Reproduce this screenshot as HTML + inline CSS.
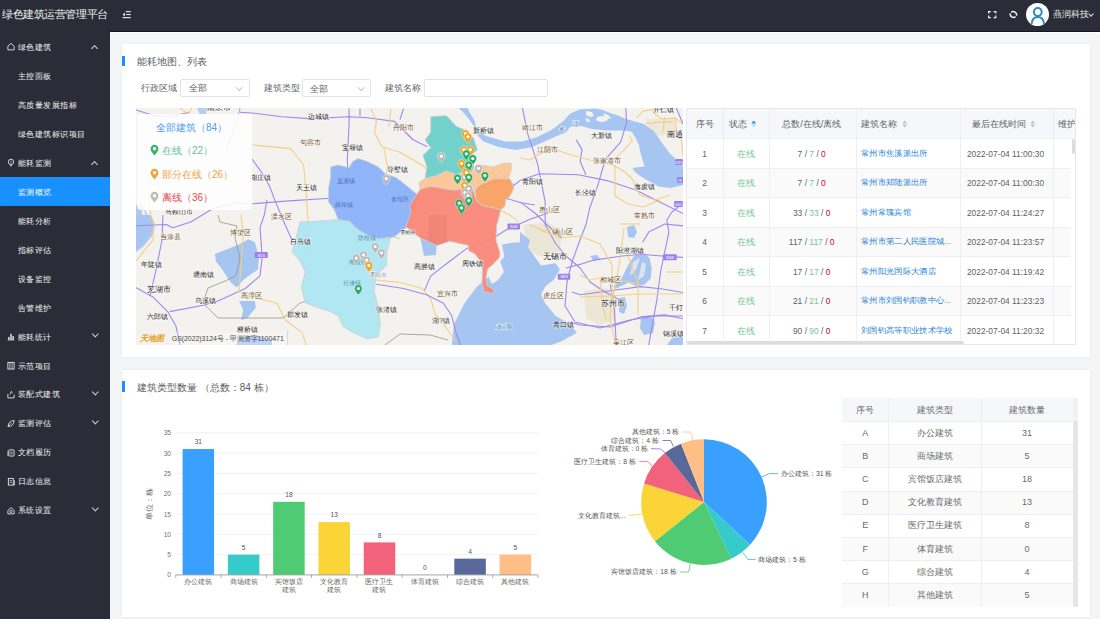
<!DOCTYPE html>
<html><head><meta charset="utf-8">
<style>
*{margin:0;padding:0;box-sizing:border-box}
html,body{width:1100px;height:619px;overflow:hidden;background:#f4f5f7;font-family:"Liberation Sans",sans-serif;text-spacing-trim:space-all;}
.a{position:absolute;white-space:nowrap}
#hdr{position:absolute;left:0;top:0;width:1100px;height:31px;background:#2a2d37;box-shadow:0 1px 0 #15161e}
#side{position:absolute;left:0;top:31px;width:110px;height:588px;background:#2a2d37}
.mi{position:absolute;left:0;width:110px;height:29.3px;color:#f5f5f5;font-size:9px;line-height:29.3px}
.mi .t{position:absolute;left:17.6px;top:0.6px;transform:scale(0.94);transform-origin:0 50%}
.mi.g .t{left:17.5px}
.mi .ic{position:absolute;left:7px;top:10px;width:8px;height:9px}
.chev{position:absolute;left:92px;top:12px;width:5px;height:5px;border-left:1px solid #cfd0d3;border-top:1px solid #cfd0d3}
.chev.up{transform:rotate(45deg);top:14px}
.chev.dn{transform:rotate(225deg);top:9.8px;width:4.6px;height:4.6px;left:92.5px}
.mi.act{background:#1890ff;color:#fff}
.card{position:absolute;left:122px;width:967.5px;background:#fff;box-shadow:0 0 3px rgba(0,0,0,.06)}
.bar{position:absolute;left:0;width:3px;background:#1890ff}
.ttl{position:absolute;color:#5a5e66;font-size:9.8px}
.lbl{position:absolute;color:#606266;font-size:9px}
.sel{position:absolute;height:18px;border:1px solid #e2e4e9;border-radius:2px;background:#fff}
.sel span{position:absolute;left:7.3px;top:2.5px;font-size:9px;color:#606266}
.sel i{position:absolute;top:5px;width:4.5px;height:4.5px;border-right:1px solid #c0c4cc;border-bottom:1px solid #c0c4cc;transform:rotate(45deg)}
</style></head><body>
<div id="hdr">
  <div class="a" style="left:1.5px;top:6.3px;font-size:11px;color:#f2f2f2;line-height:17px;transform:scale(0.962);transform-origin:0 50%">绿色建筑运营管理平台</div>
  <svg class="a" style="left:122px;top:10px" width="9" height="9" viewBox="0 0 9 9"><path d="M0.5 4.5L3 2.5V6.5Z" fill="#ddd"/><rect x="3.8" y="1" width="5" height="1.2" fill="#ddd"/><rect x="4.2" y="3.9" width="4.6" height="1.2" fill="#ddd"/><rect x="0.5" y="7" width="8.3" height="1.2" fill="#ddd"/></svg>
  <svg class="a" style="left:988px;top:10.8px" width="9" height="8" viewBox="0 0 9 8"><path d="M0.6 2.6V0.6H2.8M5.6 0.6H7.8V2.6M7.8 4.6V6.6H5.6M2.8 6.6H0.6V4.6" stroke="#f0f0f0" stroke-width="1.2" fill="none"/></svg>
  <svg class="a" style="left:1008.5px;top:10px" width="9" height="9" viewBox="0 0 9 9"><path d="M2.2 2.3A3.4 3.4 0 0 1 7.6 5.6M6.6 6.7A3.4 3.4 0 0 1 1.2 3.4" stroke="#f0f0f0" stroke-width="1.5" fill="none"/></svg>
  <svg class="a" style="left:1026.3px;top:3px" width="23" height="23" viewBox="0 0 23 23"><circle cx="11.5" cy="11.5" r="11.5" fill="#fff"/><circle cx="11.8" cy="9" r="3.9" stroke="#2b8bbd" stroke-width="2" fill="none"/><path d="M5.6 20.8C6 16.5 8.6 14 11.8 14S17.6 16.5 18 20.8" stroke="#2b8bbd" stroke-width="2" fill="none"/></svg>
  <div class="a" style="left:1052.5px;top:8px;font-size:9px;color:#f0f0f0;line-height:13px">燕润科技</div>
  <div class="a" style="left:1088.5px;top:11.5px;width:4px;height:4px;border-right:1px solid #ddd;border-bottom:1px solid #ddd;transform:rotate(45deg)"></div>
</div>
<div class="a" style="left:110px;top:32px;width:990px;height:1px;background:#fff"></div>
<div id="side">
<div class="mi" style="top:1.35px"><svg class="ic" width="9" height="9" viewBox="0 0 9 9"><path d="M1 4.2L4.5 1L8 4.2V8.3H1Z" stroke="#e8e8e8" stroke-width="1" fill="none"/></svg><span class="t">绿色建筑</span><i class="chev up"></i></div>
<div class="mi" style="top:30.31px"><span class="t">主控面板</span></div>
<div class="mi" style="top:59.27px"><span class="t">高质量发展指标</span></div>
<div class="mi" style="top:88.23px"><span class="t">绿色建筑标识项目</span></div>
<div class="mi" style="top:117.19px"><svg class="ic" width="9" height="9" viewBox="0 0 9 9"><circle cx="4.5" cy="3.8" r="3" stroke="#e8e8e8" stroke-width="1" fill="none"/><path d="M3.2 7.2H5.8M3.6 8.5H5.4" stroke="#e8e8e8" stroke-width="0.9"/><path d="M4.5 2.5V4.8" stroke="#e8e8e8" stroke-width="0.8"/></svg><span class="t">能耗监测</span><i class="chev up"></i></div>
<div class="mi act" style="top:146.15px"><span class="t">监测概览</span></div>
<div class="mi" style="top:175.11px"><span class="t">能耗分析</span></div>
<div class="mi" style="top:204.07px"><span class="t">指标评估</span></div>
<div class="mi" style="top:233.03px"><span class="t">设备监控</span></div>
<div class="mi" style="top:261.99px"><span class="t">告警维护</span></div>
<div class="mi" style="top:290.95px"><svg class="ic" width="9" height="9" viewBox="0 0 9 9"><path d="M0.8 8.3H8.2" stroke="#e8e8e8" stroke-width="1"/><rect x="1.3" y="5" width="1.6" height="3" fill="#e8e8e8"/><rect x="3.7" y="1.5" width="1.6" height="6.5" fill="#e8e8e8"/><rect x="6.1" y="4" width="1.6" height="4" fill="#e8e8e8"/></svg><span class="t">能耗统计</span><i class="chev dn"></i></div>
<div class="mi" style="top:319.91px"><svg class="ic" width="9" height="9" viewBox="0 0 9 9"><rect x="1" y="1" width="7" height="7.5" stroke="#e8e8e8" stroke-width="1" fill="none"/><path d="M3.3 1V8.5M5.7 1V8.5" stroke="#e8e8e8" stroke-width="0.8"/></svg><span class="t">示范项目</span></div>
<div class="mi" style="top:348.87px"><svg class="ic" width="9" height="9" viewBox="0 0 9 9"><path d="M1 4V8.3H8V4.5" stroke="#e8e8e8" stroke-width="1" fill="none"/><path d="M3.5 4.5L5 1L6 2.5" stroke="#e8e8e8" stroke-width="1" fill="none"/></svg><span class="t">装配式建筑</span><i class="chev dn"></i></div>
<div class="mi" style="top:377.83px"><svg class="ic" width="9" height="9" viewBox="0 0 9 9"><path d="M1.2 8C1.5 3.5 4 1.3 8 1.2C7.8 5.5 5.5 7.8 1.2 8Z" stroke="#e8e8e8" stroke-width="1" fill="none"/><path d="M1.5 7.7L5 4.2" stroke="#e8e8e8" stroke-width="0.8"/></svg><span class="t">监测评估</span><i class="chev dn"></i></div>
<div class="mi" style="top:406.79px"><svg class="ic" width="9" height="9" viewBox="0 0 9 9"><rect x="2" y="1.5" width="6" height="7" rx="0.8" stroke="#e8e8e8" stroke-width="1" fill="none"/><path d="M1 2.5V8.5" stroke="#e8e8e8" stroke-width="0.8"/><path d="M3.5 4H6.5M3.5 6H6.5" stroke="#e8e8e8" stroke-width="0.8"/></svg><span class="t">文档履历</span></div>
<div class="mi" style="top:435.75px"><svg class="ic" width="9" height="9" viewBox="0 0 9 9"><rect x="1.5" y="1" width="5.5" height="7.5" stroke="#e8e8e8" stroke-width="1" fill="none"/><path d="M7 8.5H8.3V3" stroke="#e8e8e8" stroke-width="0.9" fill="none"/><path d="M3 3.5H5.5M3 5.5H5.5" stroke="#e8e8e8" stroke-width="0.8"/></svg><span class="t">日志信息</span></div>
<div class="mi" style="top:464.71px"><svg class="ic" width="9" height="9" viewBox="0 0 9 9"><path d="M1 4.5L4.5 1.2L8 4.5V8.3H1Z" stroke="#e8e8e8" stroke-width="1" fill="none"/><circle cx="4.5" cy="5.5" r="1.3" stroke="#e8e8e8" stroke-width="0.9" fill="none"/></svg><span class="t">系统设置</span><i class="chev dn"></i></div>
</div>
<div class="card" style="top:44px;height:313px">
  <div class="bar" style="top:11.8px;height:10.6px"></div>
  <div class="ttl" style="left:15px;top:10.9px;line-height:14px">能耗地图、列表</div>
  <div class="lbl" style="left:19.3px;top:37.5px;line-height:12px">行政区域</div>
  <div class="sel" style="left:58.4px;top:34.7px;width:69.2px"><span>全部</span><i style="left:56px"></i></div>
  <div class="lbl" style="left:141.5px;top:37.5px;line-height:12px">建筑类型</div>
  <div class="sel" style="left:180px;top:35px;width:69px"><span>全部</span><i style="left:56px"></i></div>
  <div class="lbl" style="left:263.3px;top:37.5px;line-height:12px">建筑名称</div>
  <div class="sel" style="left:302px;top:35px;width:124px"></div>
<svg class="a" style="left:14px;top:64px" width="547" height="237" viewBox="136 108 547 237">
<rect x="136" y="108" width="547" height="237" fill="#f3f2ee"/>
<path d="M524 225 L548 222 L562 232 L560 252 L540 256 L526 250Z" fill="#ebe6d6"/>
<path d="M584 291 L606 288 L616 296 L616 320 L600 325 L586 318Z" fill="#ebe6d6"/>
<path d="M646 119 L674 118 L677 134 L650 137Z" fill="#ece8dc"/>
<path d="M197 108 L207 108 L206 114 L200 115 Z" fill="#a6c5f0" opacity="0.8"/>
<path d="M136 205 L141 203 L146 212 L150 220 L155 226 L152 236 L144 246 L136 252 Z" fill="#a6c5f0" opacity="0.9"/>
<path d="M141.8 210.3 L144.3 210.3 L148.2 225.8 L141.8 242.6 L137.9 243.9 L143 225.8Z" fill="#f3f2ee"/>
<path d="M136 215 L150 215 L155 225 L145 240 L136 250Z" fill="#a6c5f0"/>
<path d="M214.9 253.9 L239.0 244.4 L248.5 239.2 L254.8 242.3 L259.0 257.0 L258.0 269.6 L251.6 273.8 L243.2 280.1 L236.9 287.5 L230.6 282.2 L222.2 269.6 L215.9 261.2 Z" fill="#a6c5f0"/>
<path d="M239.0 301.1 L254.8 301.1 L255.8 307.4 L247.4 317.9 L241.1 320.0 L243.2 309.5 Z" fill="#a6c5f0"/>
<path d="M458.7 108.0 L464.5 113.7 L470.4 121.0 L476.2 129.7 L486.4 136.3 L505.3 141.4 L522.7 141.4 L537.3 137.0 L551.8 129.7 L563.5 121.0 L570.0 113.7 L579.5 109.4 L595.5 108.6 L602.7 110.1 L610.0 113.0 L617.3 115.2 L625.3 118.8 L635.5 121.7 L643.0 123.4 L653.8 131.1 L661.4 141.9 L669.1 152.6 L676.8 160.3 L683.0 166.4 L683.0 184.9 L670.7 188.0 L658.4 186.4 L644.5 178.7 L635.3 172.6 L632.3 168.0 L644.5 166.4 L640.0 151.1 L639.1 145.0 L635.5 137.7 L631.8 131.9 L625.3 130.5 L606.4 130.5 L591.8 129.0 L580.9 126.1 L570.0 126.8 L566.4 132.6 L556.2 136.3 L544.5 141.4 L531.5 147.2 L515.5 150.1 L499.5 147.2 L483.5 141.4 L477.6 135.5 L474.7 121.0 L470.4 113.7 L467.5 108.0 Z" fill="#a6c5f0"/>
<path d="M586 111 L592 112 L594 116 L590 117 L586 115Z M585 118 L589 119 L590 122 L587 122Z" fill="#f3f2ee"/><ellipse cx="602" cy="119" rx="6" ry="3" fill="#f3f2ee"/><path d="M603 113 L608 115 L611 118 L609 119 L604 116Z" fill="#f3f2ee"/>
<path d="M502.0 244.7 L511.8 242.7 L519.1 242.3 L527.0 246.0 L541.0 265.4 L555.7 263.3 L559.9 269.6 L553.6 280.1 L545.2 286.4 L541.0 294.8 L545.2 303.3 L555.7 315.9 L570.4 324.3 L576.7 332.7 L562.0 341.1 L551.5 345.0 L451.8 345.0 L454.0 324.2 L464.5 303.2 L477.1 286.4 L489.7 275.9 L493.9 267.5 L504.4 257.0 Z" fill="#a6c5f0"/>
<path d="M520 232 L530 240 L524 262 L520 272Z" fill="#a6c5f0"/>
<path d="M490 268 L500 261 L504 272 L498 280 L492 284 L489 278Z" fill="#f3f2ee"/>
<path d="M634.5 255.3 L644.6 253.3 L649.7 258.4 L651.7 268.5 L650.7 278.6 L644.6 284.6 L636.5 286.6 L628.5 282.6 L620.4 286.6 L615.3 288.7 L613.3 286.6 L620.4 280.6 L624.4 272.5 L628.5 264.4Z" fill="#a6c5f0"/>
<path d="M633 262 L640 258 L636 270 L630 276Z M642 262 L646 264 L644 276 L638 280Z" fill="#f3f2ee" opacity="0.7"/>
<path d="M627 227 L634 225 L637 232 L634 238 L628 237Z" fill="#a6c5f0"/>
<path d="M590 256 L597 255 L600 259 L594 261Z" fill="#a6c5f0"/>
<path d="M619 298 L625 297 L627 306 L624 314 L619 312Z" fill="#a6c5f0"/>
<path d="M641 318 L650 315 L655 322 L653 333 L644 335 L640 328Z" fill="#a6c5f0"/>
<path d="M667 345 L672 338 L684 336 L684 345Z" fill="#a6c5f0"/>
<path d="M420 236 L437 238 L436 255 L424 256Z" fill="#a6c5f0"/>
<path d="M655 145 L664 142 L668 160 L660 170Z" fill="#a6c5f0" opacity="0"/>
<path d="M240.0 112.3 L254.5 113.2 L281.8 116.8 L309.1 118.6 L349.1 116.8 L367.3 117.7 L394.5 121.4 L403.6 130.5 L412.7 139.5 L427.3 146.8" stroke="#9f88ef" stroke-width="1.10" fill="none" stroke-linejoin="round"/>
<path d="M240.0 108.0 L236.0 125.0 L226.0 150.0" stroke="#9f88ef" stroke-width="0.80" fill="none" stroke-linejoin="round"/>
<path d="M252.2 159.3 L261.9 172.8 L269.7 186.4 L275.5 201.9 L285.2 225.0 L292.0 240.0" stroke="#9f88ef" stroke-width="1.10" fill="none" stroke-linejoin="round"/>
<path d="M252.2 203.8 L289.0 200.9 L334.0 198.0 L345.0 196.0" stroke="#9f88ef" stroke-width="1.10" fill="none" stroke-linejoin="round"/>
<path d="M252.7 145.0 L290.9 148.6 L303.6 165.0 L305.5 185.0 L308.4 225.0 L305.0 260.0" stroke="#f4cf84" stroke-width="1.10" fill="none" stroke-linejoin="round"/>
<path d="M134.0 225.8 L166.3 224.5 L172.8 227.8 L190.8 222.0 L208.9 211.0 L215.0 208.0 L235.0 203.0 L252.0 204.0" stroke="#9f88ef" stroke-width="1.10" fill="none" stroke-linejoin="round"/>
<path d="M163.0 215.0 L162.0 240.0 L156.0 270.0 L150.0 296.0" stroke="#9f88ef" stroke-width="1.10" fill="none" stroke-linejoin="round"/>
<path d="M134.0 286.4 L152.9 296.9 L167.6 311.6 L176.0 326.3 L180.2 345.0" stroke="#9f88ef" stroke-width="1.10" fill="none" stroke-linejoin="round"/>
<path d="M169.7 311.6 L203.3 305.3 L218.0 301.1 L245.3 288.5 L260.0 275.9 L262.2 257.0 L260.0 227.6 L264.3 215.0 L267.0 200.0" stroke="#9f88ef" stroke-width="1.10" fill="none" stroke-linejoin="round"/>
<path d="M134.0 263.3 L152.9 240.2 L154.0 223.4 L150.8 215.0 L148.0 190.0" stroke="#f4cf84" stroke-width="1.10" fill="none" stroke-linejoin="round"/>
<path d="M241.1 215.0 L243.2 236.0 L239.0 292.7" stroke="#f4cf84" stroke-width="1.10" fill="none" stroke-linejoin="round"/>
<path d="M260.0 299.0 L276.9 303.2 L285.3 320.0 L302.0 332.6 L306.3 345.0" stroke="#f4cf84" stroke-width="1.10" fill="none" stroke-linejoin="round"/>
<path d="M218.0 215.0 L220.0 222.0 L237.0 226.0 L235.0 238.0 L240.0 258.0 L236.0 276.0 L223.0 282.0 L208.0 288.0 L203.0 303.0 L218.0 318.0 L262.0 318.0 L283.0 318.0 L300.0 303.0 L310.0 300.0" stroke="#a09283" stroke-width="0.80" fill="none" stroke-linejoin="round"/>
<path d="M349.1 108.6 L349.1 123.0 L347.3 160.0 L348.0 175.0" stroke="#9f88ef" stroke-width="1.10" fill="none" stroke-linejoin="round"/>
<path d="M370.9 108.6 L376.4 121.4 L374.5 132.3 L381.8 146.8 L400.0 152.3 L421.8 165.0 L430.9 172.3" stroke="#f4cf84" stroke-width="1.10" fill="none" stroke-linejoin="round"/>
<path d="M390.9 108.6 L389.1 126.8" stroke="#f4cf84" stroke-width="1.10" fill="none" stroke-linejoin="round"/>
<path d="M383.6 146.8 L387.3 165.0 L386.0 180.0" stroke="#f4cf84" stroke-width="1.10" fill="none" stroke-linejoin="round"/>
<path d="M360.0 108.6 L360.0 115.9" stroke="#9f88ef" stroke-width="1.10" fill="none" stroke-linejoin="round"/>
<path d="M403.6 108.6 L400.0 119.5" stroke="#9f88ef" stroke-width="1.10" fill="none" stroke-linejoin="round"/>
<path d="M376.2 280.1 L399.3 282.2 L422.4 288.5 L430.8 299.0 L435.0 313.7 L443.4 324.2 L456.0 341.0" stroke="#f4cf84" stroke-width="1.10" fill="none" stroke-linejoin="round"/>
<path d="M376.2 284.3 L403.5 288.5 L426.6 294.8 L443.4 303.2 L451.8 315.8 L456.0 332.6 L460.3 345.0" stroke="#9f88ef" stroke-width="1.10" fill="none" stroke-linejoin="round"/>
<path d="M424.5 290.6 L430.8 275.9 L449.7 261.2 L466.6 248.6 L489.7 240.2 L506.5 229.7 L530.0 219.2 L548.0 213.0" stroke="#9f88ef" stroke-width="1.10" fill="none" stroke-linejoin="round"/>
<path d="M521.9 105.0 L527.8 134.1 L537.4 163.2 L545.2 201.9 L545.2 225.0 L556.0 244.0 L566.0 256.0 L580.0 268.0 L590.0 282.0 L605.0 292.0 L620.0 300.0" stroke="#9f88ef" stroke-width="1.10" fill="none" stroke-linejoin="round"/>
<path d="M625.6 105.0 L626.6 122.4 L620.8 141.8 L605.3 159.3 L597.5 186.4 L589.8 207.7 L585.9 225.0 L580.0 240.0 L572.0 262.0 L567.0 282.0 L565.0 306.0 L575.0 322.0 L600.0 328.0 L630.0 320.0 L655.0 316.0 L683.0 316.0" stroke="#9f88ef" stroke-width="1.10" fill="none" stroke-linejoin="round"/>
<path d="M500.0 172.0 L513.6 185.5 L520.0 180.6 L539.4 173.8 L578.2 174.8 L607.2 180.6 L636.3 190.3 L655.7 200.0 L683.0 213.5" stroke="#9f88ef" stroke-width="1.10" fill="none" stroke-linejoin="round"/>
<path d="M576.2 139.9 L582.0 149.6 L580.1 161.2 L585.9 174.8" stroke="#9f88ef" stroke-width="1.10" fill="none" stroke-linejoin="round"/>
<path d="M520.0 201.9 L535.5 213.5 L547.1 225.0 L562.0 238.0" stroke="#9f88ef" stroke-width="1.10" fill="none" stroke-linejoin="round"/>
<path d="M566.0 268.0 L580.0 264.4 L592.1 260.4 L620.4 256.3 L640.6 254.3 L664.8 256.3 L684.0 257.4" stroke="#9f88ef" stroke-width="1.10" fill="none" stroke-linejoin="round"/>
<path d="M572.0 292.0 L580.0 294.7 L610.3 290.7 L640.6 286.6 L660.8 288.7 L684.0 292.7" stroke="#9f88ef" stroke-width="1.10" fill="none" stroke-linejoin="round"/>
<path d="M570.0 322.0 L580.0 325.0 L610.3 327.0 L640.6 316.9 L664.8 314.9 L684.0 319.0" stroke="#9f88ef" stroke-width="1.10" fill="none" stroke-linejoin="round"/>
<path d="M610.3 284.6 L614.3 308.9 L616.3 345.0" stroke="#9f88ef" stroke-width="1.10" fill="none" stroke-linejoin="round"/>
<path d="M642.6 242.2 L648.7 232.1 L664.8 224.0 L684.0 226.0" stroke="#9f88ef" stroke-width="1.10" fill="none" stroke-linejoin="round"/>
<path d="M675.0 105.0 L683.0 124.0" stroke="#9f88ef" stroke-width="1.10" fill="none" stroke-linejoin="round"/>
<path d="M683.0 203.0 L672.0 212.0 L666.8 220.0 L668.9 232.1 L660.8 270.5 L656.7 300.8 L648.7 345.0" stroke="#9f88ef" stroke-width="1.10" fill="none" stroke-linejoin="round"/>
<path d="M520.0 158.0 L530.0 160.0 L537.0 155.0 L553.0 149.0 L575.0 156.0 L590.0 160.0 L613.0 165.0 L625.0 172.0 L633.0 180.0 L640.0 195.0 L655.0 200.0 L670.0 195.0" stroke="#f4cf84" stroke-width="1.10" fill="none" stroke-linejoin="round"/>
<path d="M615.0 165.0 L615.0 196.0 L628.0 204.0 L643.0 207.0 L660.0 200.0" stroke="#f4cf84" stroke-width="1.10" fill="none" stroke-linejoin="round"/>
<path d="M540.0 230.0 L560.0 238.0 L580.0 236.0 L600.0 244.0 L612.0 265.0 L612.0 290.0 L610.0 320.0 L616.0 345.0" stroke="#f4cf84" stroke-width="1.10" fill="none" stroke-linejoin="round"/>
<path d="M530.0 225.0 L545.0 231.0 L560.0 228.0" stroke="#f4cf84" stroke-width="1.10" fill="none" stroke-linejoin="round"/>
<path d="M580.0 297.0 L610.0 296.0 L640.0 294.0 L684.0 294.0" stroke="#f4cf84" stroke-width="1.10" fill="none" stroke-linejoin="round"/>
<path d="M600.0 280.0 L602.0 300.0 L606.0 320.0" stroke="#f4cf84" stroke-width="1.10" fill="none" stroke-linejoin="round"/>
<path d="M624.0 228.0 L620.0 260.0 L616.0 282.0 L612.0 300.0" stroke="#f4cf84" stroke-width="1.10" fill="none" stroke-linejoin="round"/>
<path d="M628.0 256.0 L638.0 282.0 L638.0 315.0" stroke="#f4cf84" stroke-width="1.10" fill="none" stroke-linejoin="round"/>
<path d="M667.0 272.0 L684.0 272.0" stroke="#f4cf84" stroke-width="1.10" fill="none" stroke-linejoin="round"/>
<path d="M580.0 275.0 L590.0 280.0 L600.0 278.0 L624.0 281.0 L640.0 285.0" stroke="#f4cf84" stroke-width="1.10" fill="none" stroke-linejoin="round"/>
<path d="M620.0 224.0 L640.0 224.0" stroke="#f4cf84" stroke-width="1.10" fill="none" stroke-linejoin="round"/>
<path d="M636.9 117.3 L643.0 111.1 L652.2 109.6 L655.3 114.2 L661.4 118.8 L675.3 118.1 L681.4 123.4" stroke="#f4cf84" stroke-width="1.10" fill="none" stroke-linejoin="round"/>
<path d="M646.1 123.4 L664.5 121.9 L673.7 121.9" stroke="#f4cf84" stroke-width="1.10" fill="none" stroke-linejoin="round"/>
<path d="M664.5 117.3 L663.0 132.6" stroke="#f4cf84" stroke-width="1.10" fill="none" stroke-linejoin="round"/>
<path d="M675.3 117.3 L676.8 135.7 L681.4 140.3 L683.0 155.7" stroke="#f4cf84" stroke-width="1.10" fill="none" stroke-linejoin="round"/>
<path d="M629.2 135.7 L632.3 140.3 L623.0 151.1 L609.2 163.4" stroke="#f4cf84" stroke-width="1.10" fill="none" stroke-linejoin="round"/>
<path d="M385.0 345.0 L400.0 334.0 L430.0 335.0 L448.0 340.0" stroke="#a09283" stroke-width="0.80" fill="none" stroke-linejoin="round"/>
<path d="M300.0 222.0 L316.8 221.3 L338.2 219.4 L349.8 221.3 L357.5 229.1 L367.2 234.9 L378.9 238.8 L394.4 236.8 L400.2 238.8 L390.9 236.0 L386.7 252.8 L386.7 265.4 L376.2 275.9 L374.1 290.6 L378.3 307.4 L380.4 324.2 L378.3 336.8 L367.8 339.0 L353.1 332.6 L342.6 326.3 L338.4 315.8 L330.0 311.6 L314.9 306.6 L305.2 302.7 L301.3 287.2 L305.2 271.7 L299.4 260.1 L292.0 252.0 L296.0 238.0 Z" fill="#ade5f2" fill-opacity="0.95" stroke="#cfcfcf" stroke-opacity="0.8" stroke-width="1"/>
<path d="M330.9 166.8 L338.2 165.0 L349.1 167.7 L352.7 161.4 L358.2 158.6 L367.3 161.4 L378.2 166.8 L385.5 174.1 L396.4 177.7 L407.5 186.4 L419.1 196.1 L413.3 209.7 L409.5 225.0 L404.1 229.1 L394.4 236.8 L378.9 238.8 L367.2 234.9 L357.5 229.1 L349.8 221.3 L338.2 219.4 L334.3 209.7 L328.5 201.9 L328.5 188.4 L330.4 178.7 Z" fill="#8ab1f8" fill-opacity="0.95" stroke="#cfcfcf" stroke-opacity="0.8" stroke-width="1"/>
<path d="M430.8 116.6 L446.3 115.7 L450.2 119.5 L456.0 126.3 L465.7 130.2 L473.4 137.9 L477.3 149.6 L471.5 155.4 L469.5 169.0 L456.0 174.8 L446.3 170.9 L436.6 175.7 L425.0 178.6 L426.9 167.0 L423.0 155.4 L430.8 147.6 L425.0 139.9 L430.8 132.1 Z" fill="#6ccfc8" fill-opacity="0.95" stroke="#cfcfcf" stroke-opacity="0.8" stroke-width="1"/>
<path d="M425.0 178.6 L436.6 175.7 L446.3 170.9 L456.0 174.8 L469.5 169.0 L481.2 165.1 L492.8 167.0 L504.4 163.1 L511.2 163.1 L511.2 170.9 L508.3 178.6 L500.5 180.6 L490.9 184.5 L479.2 186.4 L473.4 190.3 L465.7 188.3 L454.0 190.3 L442.4 188.3 L430.8 186.4 L420.1 189.3 L419.1 182.5 Z" fill="#fcc493" fill-opacity="0.95" stroke="#cfcfcf" stroke-opacity="0.8" stroke-width="1"/>
<path d="M474.8 190.4 L480.0 185.0 L494.0 179.0 L510.0 179.0 L514.0 188.0 L510.0 196.0 L505.5 200.0 L505.0 206.0 L500.7 209.7 L494.2 208.1 L482.1 205.7 L476.0 200.0 Z" fill="#f9a062" fill-opacity="0.95" stroke="#cfcfcf" stroke-opacity="0.8" stroke-width="1"/>
<path d="M409.5 205.8 L420.1 189.3 L430.8 186.4 L442.4 188.3 L454.0 190.3 L465.7 188.3 L473.4 190.3 L476.0 200.0 L482.1 205.7 L494.2 208.1 L500.7 209.7 L499.1 217.0 L496.7 225.0 L496.0 240.0 L500.0 253.0 L499.1 258.1 L491.8 265.4 L487.5 269.0 L486.0 278.0 L487.0 285.5 L494.0 289.5 L493.0 293.5 L484.0 291.5 L482.0 283.0 L482.5 270.0 L481.0 262.0 L475.0 254.0 L468.7 250.7 L468.7 245.5 L449.7 241.3 L437.1 245.5 L420.3 238.1 L405.6 226.6 L407.9 221.3 L411.0 212.0 Z" fill="#fa8777" fill-opacity="0.95" stroke="#cfcfcf" stroke-opacity="0.8" stroke-width="1"/>
<path d="M429 215 L447 215 L447 242 L437 245 L428 240Z" fill="#d96a60" opacity="0.2"/>
<text x="318.0" y="116.6" font-size="7.0" fill="#222" font-weight="500" text-anchor="middle" dominant-baseline="central" stroke="#fff" stroke-width="1.1" stroke-opacity="0.8" paint-order="stroke">边城镇</text>
<text x="310.4" y="142.8" font-size="7.0" fill="#6e4a18" font-weight="500" text-anchor="middle" dominant-baseline="central" stroke="#fff" stroke-width="1.1" stroke-opacity="0.8" paint-order="stroke">句容市</text>
<text x="306.5" y="187.4" font-size="7.0" fill="#222" font-weight="500" text-anchor="middle" dominant-baseline="central" stroke="#fff" stroke-width="1.1" stroke-opacity="0.8" paint-order="stroke">天王镇</text>
<text x="281.3" y="216.4" font-size="7.0" fill="#6e4a18" font-weight="500" text-anchor="middle" dominant-baseline="central" stroke="#fff" stroke-width="1.1" stroke-opacity="0.8" paint-order="stroke">溧水区</text>
<text x="260.0" y="177.7" font-size="7.0" fill="#222" font-weight="500" text-anchor="middle" dominant-baseline="central" stroke="#fff" stroke-width="1.1" stroke-opacity="0.8" paint-order="stroke">湖庄镇</text>
<text x="178.6" y="211.6" font-size="7.0" fill="#222" font-weight="500" text-anchor="middle" dominant-baseline="central" stroke="#fff" stroke-width="1.1" stroke-opacity="0.8" paint-order="stroke">马鞍山市</text>
<text x="170.8" y="236.0" font-size="7.0" fill="#6e4a18" font-weight="500" text-anchor="middle" dominant-baseline="central" stroke="#fff" stroke-width="1.1" stroke-opacity="0.8" paint-order="stroke">当涂县</text>
<text x="240.1" y="232.9" font-size="7.0" fill="#6e4a18" font-weight="500" text-anchor="middle" dominant-baseline="central" stroke="#fff" stroke-width="1.1" stroke-opacity="0.8" paint-order="stroke">博望区</text>
<text x="151.9" y="264.4" font-size="7.0" fill="#222" font-weight="500" text-anchor="middle" dominant-baseline="central" stroke="#fff" stroke-width="1.1" stroke-opacity="0.8" paint-order="stroke">年陡镇</text>
<text x="203.3" y="274.9" font-size="7.0" fill="#222" font-weight="500" text-anchor="middle" dominant-baseline="central" stroke="#fff" stroke-width="1.1" stroke-opacity="0.8" paint-order="stroke">塘南镇</text>
<text x="205.4" y="300.1" font-size="7.0" fill="#222" font-weight="500" text-anchor="middle" dominant-baseline="central" stroke="#fff" stroke-width="1.1" stroke-opacity="0.8" paint-order="stroke">乌溪镇</text>
<text x="251.6" y="295.9" font-size="7.0" fill="#6e4a18" font-weight="500" text-anchor="middle" dominant-baseline="central" stroke="#fff" stroke-width="1.1" stroke-opacity="0.8" paint-order="stroke">高淳区</text>
<text x="157.1" y="316.9" font-size="7.0" fill="#222" font-weight="500" text-anchor="middle" dominant-baseline="central" stroke="#fff" stroke-width="1.1" stroke-opacity="0.8" paint-order="stroke">六郎镇</text>
<text x="247.4" y="329.5" font-size="7.0" fill="#222" font-weight="500" text-anchor="middle" dominant-baseline="central" stroke="#fff" stroke-width="1.1" stroke-opacity="0.8" paint-order="stroke">桠桥镇</text>
<text x="300.0" y="241.3" font-size="7.0" fill="#222" font-weight="500" text-anchor="middle" dominant-baseline="central" stroke="#fff" stroke-width="1.1" stroke-opacity="0.8" paint-order="stroke">自马镇</text>
<text x="297.9" y="314.8" font-size="7.0" fill="#222" font-weight="500" text-anchor="middle" dominant-baseline="central" stroke="#fff" stroke-width="1.1" stroke-opacity="0.8" paint-order="stroke">郡发镇</text>
<text x="403.6" y="127.3" font-size="7.0" fill="#6e4a18" font-weight="500" text-anchor="middle" dominant-baseline="central" stroke="#fff" stroke-width="1.1" stroke-opacity="0.8" paint-order="stroke">丹阳市</text>
<text x="352.3" y="147.6" font-size="7.0" fill="#222" font-weight="500" text-anchor="middle" dominant-baseline="central" stroke="#fff" stroke-width="1.1" stroke-opacity="0.8" paint-order="stroke">宝堰镇</text>
<text x="397.8" y="169.0" font-size="7.0" fill="#222" font-weight="500" text-anchor="middle" dominant-baseline="central" stroke="#fff" stroke-width="1.1" stroke-opacity="0.8" paint-order="stroke">导墅镇</text>
<text x="483.1" y="130.2" font-size="7.0" fill="#222" font-weight="500" text-anchor="middle" dominant-baseline="central" stroke="#fff" stroke-width="1.1" stroke-opacity="0.8" paint-order="stroke">新桥镇</text>
<text x="532.6" y="127.3" font-size="7.0" fill="#6e4a18" font-weight="500" text-anchor="middle" dominant-baseline="central" stroke="#fff" stroke-width="1.1" stroke-opacity="0.8" paint-order="stroke">靖江市</text>
<text x="601.3" y="135.5" font-size="7.0" fill="#222" font-weight="500" text-anchor="middle" dominant-baseline="central" stroke="#fff" stroke-width="1.1" stroke-opacity="0.8" paint-order="stroke">大新镇</text>
<text x="663.4" y="109.8" font-size="7.0" fill="#222" font-weight="500" text-anchor="middle" dominant-baseline="central" stroke="#fff" stroke-width="1.1" stroke-opacity="0.8" paint-order="stroke">开仁镇</text>
<text x="547.1" y="149.6" font-size="7.0" fill="#6e4a18" font-weight="500" text-anchor="middle" dominant-baseline="central" stroke="#fff" stroke-width="1.1" stroke-opacity="0.8" paint-order="stroke">江阴市</text>
<text x="607.2" y="160.2" font-size="7.0" fill="#6e4a18" font-weight="500" text-anchor="middle" dominant-baseline="central" stroke="#fff" stroke-width="1.1" stroke-opacity="0.8" paint-order="stroke">张家港市</text>
<text x="532.6" y="181.6" font-size="7.0" fill="#222" font-weight="500" text-anchor="middle" dominant-baseline="central" stroke="#fff" stroke-width="1.1" stroke-opacity="0.8" paint-order="stroke">青阳镇</text>
<text x="585.9" y="192.2" font-size="7.0" fill="#222" font-weight="500" text-anchor="middle" dominant-baseline="central" stroke="#fff" stroke-width="1.1" stroke-opacity="0.8" paint-order="stroke">长泾镇</text>
<text x="644.1" y="186.4" font-size="7.0" fill="#222" font-weight="500" text-anchor="middle" dominant-baseline="central" stroke="#fff" stroke-width="1.1" stroke-opacity="0.8" paint-order="stroke">海虞镇</text>
<text x="549.1" y="209.7" font-size="7.0" fill="#6e4a18" font-weight="500" text-anchor="middle" dominant-baseline="central" stroke="#fff" stroke-width="1.1" stroke-opacity="0.8" paint-order="stroke">惠山区</text>
<text x="644.1" y="215.5" font-size="7.0" fill="#6e4a18" font-weight="500" text-anchor="middle" dominant-baseline="central" stroke="#fff" stroke-width="1.1" stroke-opacity="0.8" paint-order="stroke">常熟市</text>
<text x="562.0" y="231.8" font-size="7.0" fill="#6e4a18" font-weight="500" text-anchor="middle" dominant-baseline="central" stroke="#fff" stroke-width="1.1" stroke-opacity="0.8" paint-order="stroke">锡山区</text>
<text x="629.5" y="250.3" font-size="7.0" fill="#222" font-weight="500" text-anchor="middle" dominant-baseline="central" stroke="#fff" stroke-width="1.1" stroke-opacity="0.8" paint-order="stroke">阳澄湖镇</text>
<text x="610.3" y="279.6" font-size="7.0" fill="#6e4a18" font-weight="500" text-anchor="middle" dominant-baseline="central" stroke="#fff" stroke-width="1.1" stroke-opacity="0.8" paint-order="stroke">相城区</text>
<text x="553.6" y="295.9" font-size="7.0" fill="#6e4a18" font-weight="500" text-anchor="middle" dominant-baseline="central" stroke="#fff" stroke-width="1.1" stroke-opacity="0.8" paint-order="stroke">虎丘区</text>
<text x="675.5" y="307.5" font-size="7.0" fill="#222" font-weight="500" text-anchor="middle" dominant-baseline="central" stroke="#fff" stroke-width="1.1" stroke-opacity="0.8" paint-order="stroke">千灯</text>
<text x="563.1" y="324.3" font-size="7.0" fill="#222" font-weight="500" text-anchor="middle" dominant-baseline="central" stroke="#fff" stroke-width="1.1" stroke-opacity="0.8" paint-order="stroke">青口镇</text>
<text x="623.0" y="342.1" font-size="7.0" fill="#6e4a18" font-weight="500" text-anchor="middle" dominant-baseline="central" stroke="#fff" stroke-width="1.1" stroke-opacity="0.8" paint-order="stroke">吴江区</text>
<text x="673.4" y="333.7" font-size="7.0" fill="#222" font-weight="500" text-anchor="middle" dominant-baseline="central" stroke="#fff" stroke-width="1.1" stroke-opacity="0.8" paint-order="stroke">锦溪镇</text>
<text x="424.5" y="266.5" font-size="7.0" fill="#222" font-weight="500" text-anchor="middle" dominant-baseline="central" stroke="#fff" stroke-width="1.1" stroke-opacity="0.8" paint-order="stroke">高塍镇</text>
<text x="472.9" y="263.3" font-size="7.0" fill="#222" font-weight="500" text-anchor="middle" dominant-baseline="central" stroke="#fff" stroke-width="1.1" stroke-opacity="0.8" paint-order="stroke">周铁镇</text>
<text x="447.6" y="293.8" font-size="7.0" fill="#6e4a18" font-weight="500" text-anchor="middle" dominant-baseline="central" stroke="#fff" stroke-width="1.1" stroke-opacity="0.8" paint-order="stroke">宜兴市</text>
<text x="386.7" y="309.5" font-size="7.0" fill="#222" font-weight="500" text-anchor="middle" dominant-baseline="central" stroke="#fff" stroke-width="1.1" stroke-opacity="0.8" paint-order="stroke">张渚镇</text>
<text x="441.3" y="320.0" font-size="7.0" fill="#333" font-weight="500" text-anchor="middle" dominant-baseline="central" stroke="#fff" stroke-width="1.1" stroke-opacity="0.8" paint-order="stroke">湖?镇</text>
<text x="159.2" y="289.6" font-size="8.0" fill="#222" font-weight="normal" text-anchor="middle" dominant-baseline="central" stroke="#fff" stroke-width="1.1" stroke-opacity="0.8" paint-order="stroke">芜湖市</text>
<text x="554.7" y="256.0" font-size="8.0" fill="#222" font-weight="normal" text-anchor="middle" dominant-baseline="central" stroke="#fff" stroke-width="1.1" stroke-opacity="0.8" paint-order="stroke">无锡市</text>
<text x="612.5" y="303.3" font-size="8.0" fill="#222" font-weight="normal" text-anchor="middle" dominant-baseline="central" stroke="#fff" stroke-width="1.1" stroke-opacity="0.8" paint-order="stroke">苏州市</text>
<text x="675.0" y="134.1" font-size="8.0" fill="#222" font-weight="normal" text-anchor="middle" dominant-baseline="central" stroke="#fff" stroke-width="1.1" stroke-opacity="0.8" paint-order="stroke">南通</text>
<text x="504.4" y="326.3" font-size="6.5" fill="#2f78b8" font-weight="normal" text-anchor="middle" dominant-baseline="central" stroke="#fff" stroke-width="1.1" stroke-opacity="0.8" paint-order="stroke">太 湖</text>
<text x="562.0" y="129.7" font-size="6.5" fill="#2f78b8" font-weight="normal" text-anchor="middle" dominant-baseline="central" stroke="#fff" stroke-width="1.1" stroke-opacity="0.8" paint-order="stroke">长</text>
<text x="575.0" y="123.2" font-size="6.5" fill="#2f78b8" font-weight="normal" text-anchor="middle" dominant-baseline="central" stroke="#fff" stroke-width="1.1" stroke-opacity="0.8" paint-order="stroke">江</text>
<text x="345.5" y="180.6" font-size="6.0" fill="#4a6ab0" font-weight="normal" text-anchor="middle" dominant-baseline="central">直溪镇</text>
<text x="399.8" y="199.0" font-size="6.0" fill="#4a6ab0" font-weight="normal" text-anchor="middle" dominant-baseline="central">金坛区</text>
<text x="343.6" y="204.8" font-size="6.0" fill="#4a6ab0" font-weight="normal" text-anchor="middle" dominant-baseline="central">薛埠镇</text>
<text x="407.7" y="231.8" font-size="5.0" fill="#333" font-weight="normal" text-anchor="middle" dominant-baseline="central" stroke="#fff" stroke-width="1.1" stroke-opacity="0.8" paint-order="stroke">雪柏镇</text>
<text x="378.3" y="274.9" font-size="5.5" fill="#8a8a8a" font-weight="normal" text-anchor="middle" dominant-baseline="central" stroke="#fff" stroke-width="1.1" stroke-opacity="0.8" paint-order="stroke">溧阳市</text>
<text x="366.8" y="238.1" font-size="6.0" fill="#5a90a8" font-weight="normal" text-anchor="middle" dominant-baseline="central">防校镇</text>
<text x="358.0" y="262.0" font-size="6.0" fill="#5a90a8" font-weight="normal" text-anchor="middle" dominant-baseline="central">南渡镇</text>
<text x="352.0" y="283.0" font-size="6.0" fill="#5a90a8" font-weight="normal" text-anchor="middle" dominant-baseline="central">社渚镇</text>
<text x="219.0" y="107.5" font-size="8.0" fill="#222" font-weight="normal" text-anchor="middle" dominant-baseline="central" stroke="#fff" stroke-width="1.1" stroke-opacity="0.8" paint-order="stroke">南京市</text>
<path d="M136.0 110.0 L152.0 115.0 L170.0 117.0 L190.0 112.0" stroke="#9f88ef" stroke-width="1.10" fill="none" stroke-linejoin="round"/>
<path d="M180.0 108.0 L188.0 114.0 L192.0 108.0" stroke="#f4cf84" stroke-width="1.10" fill="none" stroke-linejoin="round"/>
<path d="M507.0 198.4 L520.0 202.5 L535.0 205.0" stroke="#9f88ef" stroke-width="1.10" fill="none" stroke-linejoin="round"/>
<path d="M500.7 210.5 L510.4 215.4 L518.5 221.9" stroke="#f4cf84" stroke-width="1.10" fill="none" stroke-linejoin="round"/>
<rect x="254.8" y="252.0" width="13.0" height="6" rx="1.2" fill="#9b83e6"/>
<text x="261.3" y="255.0" font-size="4.3" fill="#fff" text-anchor="middle" dominant-baseline="central">S55</text>
<rect x="507.5" y="223.4" width="12.5" height="6" rx="1.2" fill="#9b83e6"/>
<text x="513.8" y="226.4" font-size="4.3" fill="#fff" text-anchor="middle" dominant-baseline="central">S48</text>
<rect x="662.8" y="254.3" width="14.0" height="6" rx="1.2" fill="#9b83e6"/>
<text x="669.8" y="257.3" font-size="4.3" fill="#fff" text-anchor="middle" dominant-baseline="central">S48</text>
<rect x="557.8" y="273.8" width="12.5" height="6" rx="1.2" fill="#9b83e6"/>
<text x="564.0" y="276.8" font-size="4.3" fill="#fff" text-anchor="middle" dominant-baseline="central">S83</text>
<rect x="675.0" y="159.0" width="8.0" height="6" rx="1.2" fill="#9b83e6"/>
<text x="679.0" y="162.0" font-size="4.3" fill="#fff" text-anchor="middle" dominant-baseline="central">G15</text>
<rect x="677.0" y="177.0" width="6.0" height="6" rx="1.2" fill="#9b83e6"/>
<text x="680.0" y="180.0" font-size="4.3" fill="#fff" text-anchor="middle" dominant-baseline="central">G</text>
<rect x="674.0" y="201.0" width="9.0" height="6" rx="1.2" fill="#9b83e6"/>
<text x="678.5" y="204.0" font-size="4.3" fill="#fff" text-anchor="middle" dominant-baseline="central">G15</text>
<path d="M236 345 L240 338 L252 335 L262 337 L272 340 L272 345Z" fill="#a6c5f0"/>
<rect x="170" y="332" width="117" height="13" fill="#fff" fill-opacity="0.25"/><rect x="287" y="331" width="0.6" height="14" fill="#ccc"/>
<text x="140" y="338.5" font-size="8" fill="#e8a020" font-style="italic" font-weight="bold" dominant-baseline="central" font-family="Liberation Serif">天地图</text>
<text x="171.8" y="338.5" font-size="7" fill="#4a4a4a" dominant-baseline="central" textLength="112">GS(2022)3124号 - 甲测资字1100471</text>
<g transform="translate(441.3 156.2) scale(1.15)"><path d="M0 -3.3 c-1.9 0 -3.3 1.5 -3.3 3.3 c0 2.3 3.3 5.6 3.3 5.6 s3.3 -3.3 3.3 -5.6 c0 -1.8 -1.4 -3.3 -3.3 -3.3z" fill="#b8b8b8" stroke="#fff" stroke-opacity="0.7" stroke-width="0.5"/><circle cx="0" cy="0" r="1.4" fill="#fff"/></g>
<g transform="translate(386.2 178.6) scale(1.15)"><path d="M0 -3.3 c-1.9 0 -3.3 1.5 -3.3 3.3 c0 2.3 3.3 5.6 3.3 5.6 s3.3 -3.3 3.3 -5.6 c0 -1.8 -1.4 -3.3 -3.3 -3.3z" fill="#b8b8b8" stroke="#fff" stroke-opacity="0.7" stroke-width="0.5"/><circle cx="0" cy="0" r="1.4" fill="#fff"/></g>
<g transform="translate(375.2 246.5) scale(1.15)"><path d="M0 -3.3 c-1.9 0 -3.3 1.5 -3.3 3.3 c0 2.3 3.3 5.6 3.3 5.6 s3.3 -3.3 3.3 -5.6 c0 -1.8 -1.4 -3.3 -3.3 -3.3z" fill="#b8b8b8" stroke="#fff" stroke-opacity="0.7" stroke-width="0.5"/><circle cx="0" cy="0" r="1.4" fill="#fff"/></g>
<g transform="translate(381.5 252.8) scale(1.15)"><path d="M0 -3.3 c-1.9 0 -3.3 1.5 -3.3 3.3 c0 2.3 3.3 5.6 3.3 5.6 s3.3 -3.3 3.3 -5.6 c0 -1.8 -1.4 -3.3 -3.3 -3.3z" fill="#b8b8b8" stroke="#fff" stroke-opacity="0.7" stroke-width="0.5"/><circle cx="0" cy="0" r="1.4" fill="#fff"/></g>
<g transform="translate(356.3 258.1) scale(1.15)"><path d="M0 -3.3 c-1.9 0 -3.3 1.5 -3.3 3.3 c0 2.3 3.3 5.6 3.3 5.6 s3.3 -3.3 3.3 -5.6 c0 -1.8 -1.4 -3.3 -3.3 -3.3z" fill="#b8b8b8" stroke="#fff" stroke-opacity="0.7" stroke-width="0.5"/><circle cx="0" cy="0" r="1.4" fill="#fff"/></g>
<g transform="translate(363.6 254.9) scale(1.15)"><path d="M0 -3.3 c-1.9 0 -3.3 1.5 -3.3 3.3 c0 2.3 3.3 5.6 3.3 5.6 s3.3 -3.3 3.3 -5.6 c0 -1.8 -1.4 -3.3 -3.3 -3.3z" fill="#b8b8b8" stroke="#fff" stroke-opacity="0.7" stroke-width="0.5"/><circle cx="0" cy="0" r="1.4" fill="#fff"/></g>
<g transform="translate(366.8 260.2) scale(1.15)"><path d="M0 -3.3 c-1.9 0 -3.3 1.5 -3.3 3.3 c0 2.3 3.3 5.6 3.3 5.6 s3.3 -3.3 3.3 -5.6 c0 -1.8 -1.4 -3.3 -3.3 -3.3z" fill="#b8b8b8" stroke="#fff" stroke-opacity="0.7" stroke-width="0.5"/><circle cx="0" cy="0" r="1.4" fill="#fff"/></g>
<g transform="translate(368.9 265.4) scale(1.15)"><path d="M0 -3.3 c-1.9 0 -3.3 1.5 -3.3 3.3 c0 2.3 3.3 5.6 3.3 5.6 s3.3 -3.3 3.3 -5.6 c0 -1.8 -1.4 -3.3 -3.3 -3.3z" fill="#f5a21c" stroke="#fff" stroke-opacity="0.7" stroke-width="0.5"/><circle cx="0" cy="0" r="1.4" fill="#fff"/></g>
<g transform="translate(358.4 288.5) scale(1.15)"><path d="M0 -3.3 c-1.9 0 -3.3 1.5 -3.3 3.3 c0 2.3 3.3 5.6 3.3 5.6 s3.3 -3.3 3.3 -5.6 c0 -1.8 -1.4 -3.3 -3.3 -3.3z" fill="#24ad5c" stroke="#fff" stroke-opacity="0.7" stroke-width="0.5"/><circle cx="0" cy="0" r="1.4" fill="#fff"/></g>
<g transform="translate(465.5 133.6) scale(1.15)"><path d="M0 -3.3 c-1.9 0 -3.3 1.5 -3.3 3.3 c0 2.3 3.3 5.6 3.3 5.6 s3.3 -3.3 3.3 -5.6 c0 -1.8 -1.4 -3.3 -3.3 -3.3z" fill="#f5a21c" stroke="#fff" stroke-opacity="0.7" stroke-width="0.5"/><circle cx="0" cy="0" r="1.4" fill="#fff"/></g>
<g transform="translate(468.0 136.8) scale(1.15)"><path d="M0 -3.3 c-1.9 0 -3.3 1.5 -3.3 3.3 c0 2.3 3.3 5.6 3.3 5.6 s3.3 -3.3 3.3 -5.6 c0 -1.8 -1.4 -3.3 -3.3 -3.3z" fill="#f5a21c" stroke="#fff" stroke-opacity="0.7" stroke-width="0.5"/><circle cx="0" cy="0" r="1.4" fill="#fff"/></g>
<g transform="translate(463.9 149.7) scale(1.15)"><path d="M0 -3.3 c-1.9 0 -3.3 1.5 -3.3 3.3 c0 2.3 3.3 5.6 3.3 5.6 s3.3 -3.3 3.3 -5.6 c0 -1.8 -1.4 -3.3 -3.3 -3.3z" fill="#f5a21c" stroke="#fff" stroke-opacity="0.7" stroke-width="0.5"/><circle cx="0" cy="0" r="1.4" fill="#fff"/></g>
<g transform="translate(470.4 149.7) scale(1.15)"><path d="M0 -3.3 c-1.9 0 -3.3 1.5 -3.3 3.3 c0 2.3 3.3 5.6 3.3 5.6 s3.3 -3.3 3.3 -5.6 c0 -1.8 -1.4 -3.3 -3.3 -3.3z" fill="#f5a21c" stroke="#fff" stroke-opacity="0.7" stroke-width="0.5"/><circle cx="0" cy="0" r="1.4" fill="#fff"/></g>
<g transform="translate(466.3 153.8) scale(1.15)"><path d="M0 -3.3 c-1.9 0 -3.3 1.5 -3.3 3.3 c0 2.3 3.3 5.6 3.3 5.6 s3.3 -3.3 3.3 -5.6 c0 -1.8 -1.4 -3.3 -3.3 -3.3z" fill="#24ad5c" stroke="#fff" stroke-opacity="0.7" stroke-width="0.5"/><circle cx="0" cy="0" r="1.4" fill="#fff"/></g>
<g transform="translate(472.8 158.6) scale(1.15)"><path d="M0 -3.3 c-1.9 0 -3.3 1.5 -3.3 3.3 c0 2.3 3.3 5.6 3.3 5.6 s3.3 -3.3 3.3 -5.6 c0 -1.8 -1.4 -3.3 -3.3 -3.3z" fill="#24ad5c" stroke="#fff" stroke-opacity="0.7" stroke-width="0.5"/><circle cx="0" cy="0" r="1.4" fill="#fff"/></g>
<g transform="translate(470.4 166.7) scale(1.15)"><path d="M0 -3.3 c-1.9 0 -3.3 1.5 -3.3 3.3 c0 2.3 3.3 5.6 3.3 5.6 s3.3 -3.3 3.3 -5.6 c0 -1.8 -1.4 -3.3 -3.3 -3.3z" fill="#b8b8b8" stroke="#fff" stroke-opacity="0.7" stroke-width="0.5"/><circle cx="0" cy="0" r="1.4" fill="#fff"/></g>
<g transform="translate(478.5 168.3) scale(1.15)"><path d="M0 -3.3 c-1.9 0 -3.3 1.5 -3.3 3.3 c0 2.3 3.3 5.6 3.3 5.6 s3.3 -3.3 3.3 -5.6 c0 -1.8 -1.4 -3.3 -3.3 -3.3z" fill="#b8b8b8" stroke="#fff" stroke-opacity="0.7" stroke-width="0.5"/><circle cx="0" cy="0" r="1.4" fill="#fff"/></g>
<g transform="translate(461.5 163.5) scale(1.15)"><path d="M0 -3.3 c-1.9 0 -3.3 1.5 -3.3 3.3 c0 2.3 3.3 5.6 3.3 5.6 s3.3 -3.3 3.3 -5.6 c0 -1.8 -1.4 -3.3 -3.3 -3.3z" fill="#f5a21c" stroke="#fff" stroke-opacity="0.7" stroke-width="0.5"/><circle cx="0" cy="0" r="1.4" fill="#fff"/></g>
<g transform="translate(468.8 165.1) scale(1.15)"><path d="M0 -3.3 c-1.9 0 -3.3 1.5 -3.3 3.3 c0 2.3 3.3 5.6 3.3 5.6 s3.3 -3.3 3.3 -5.6 c0 -1.8 -1.4 -3.3 -3.3 -3.3z" fill="#24ad5c" stroke="#fff" stroke-opacity="0.7" stroke-width="0.5"/><circle cx="0" cy="0" r="1.4" fill="#fff"/></g>
<g transform="translate(464.7 177.2) scale(1.15)"><path d="M0 -3.3 c-1.9 0 -3.3 1.5 -3.3 3.3 c0 2.3 3.3 5.6 3.3 5.6 s3.3 -3.3 3.3 -5.6 c0 -1.8 -1.4 -3.3 -3.3 -3.3z" fill="#b8b8b8" stroke="#fff" stroke-opacity="0.7" stroke-width="0.5"/><circle cx="0" cy="0" r="1.4" fill="#fff"/></g>
<g transform="translate(466.3 172.4) scale(1.15)"><path d="M0 -3.3 c-1.9 0 -3.3 1.5 -3.3 3.3 c0 2.3 3.3 5.6 3.3 5.6 s3.3 -3.3 3.3 -5.6 c0 -1.8 -1.4 -3.3 -3.3 -3.3z" fill="#f5a21c" stroke="#fff" stroke-opacity="0.7" stroke-width="0.5"/><circle cx="0" cy="0" r="1.4" fill="#fff"/></g>
<g transform="translate(468.8 177.2) scale(1.15)"><path d="M0 -3.3 c-1.9 0 -3.3 1.5 -3.3 3.3 c0 2.3 3.3 5.6 3.3 5.6 s3.3 -3.3 3.3 -5.6 c0 -1.8 -1.4 -3.3 -3.3 -3.3z" fill="#24ad5c" stroke="#fff" stroke-opacity="0.7" stroke-width="0.5"/><circle cx="0" cy="0" r="1.4" fill="#fff"/></g>
<g transform="translate(457.5 178.0) scale(1.15)"><path d="M0 -3.3 c-1.9 0 -3.3 1.5 -3.3 3.3 c0 2.3 3.3 5.6 3.3 5.6 s3.3 -3.3 3.3 -5.6 c0 -1.8 -1.4 -3.3 -3.3 -3.3z" fill="#24ad5c" stroke="#fff" stroke-opacity="0.7" stroke-width="0.5"/><circle cx="0" cy="0" r="1.4" fill="#fff"/></g>
<g transform="translate(484.9 175.6) scale(1.15)"><path d="M0 -3.3 c-1.9 0 -3.3 1.5 -3.3 3.3 c0 2.3 3.3 5.6 3.3 5.6 s3.3 -3.3 3.3 -5.6 c0 -1.8 -1.4 -3.3 -3.3 -3.3z" fill="#24ad5c" stroke="#fff" stroke-opacity="0.7" stroke-width="0.5"/><circle cx="0" cy="0" r="1.4" fill="#fff"/></g>
<g transform="translate(464.7 185.3) scale(1.15)"><path d="M0 -3.3 c-1.9 0 -3.3 1.5 -3.3 3.3 c0 2.3 3.3 5.6 3.3 5.6 s3.3 -3.3 3.3 -5.6 c0 -1.8 -1.4 -3.3 -3.3 -3.3z" fill="#f5a21c" stroke="#fff" stroke-opacity="0.7" stroke-width="0.5"/><circle cx="0" cy="0" r="1.4" fill="#fff"/></g>
<g transform="translate(468.8 188.5) scale(1.15)"><path d="M0 -3.3 c-1.9 0 -3.3 1.5 -3.3 3.3 c0 2.3 3.3 5.6 3.3 5.6 s3.3 -3.3 3.3 -5.6 c0 -1.8 -1.4 -3.3 -3.3 -3.3z" fill="#b8b8b8" stroke="#fff" stroke-opacity="0.7" stroke-width="0.5"/><circle cx="0" cy="0" r="1.4" fill="#fff"/></g>
<g transform="translate(464.7 192.5) scale(1.15)"><path d="M0 -3.3 c-1.9 0 -3.3 1.5 -3.3 3.3 c0 2.3 3.3 5.6 3.3 5.6 s3.3 -3.3 3.3 -5.6 c0 -1.8 -1.4 -3.3 -3.3 -3.3z" fill="#b8b8b8" stroke="#fff" stroke-opacity="0.7" stroke-width="0.5"/><circle cx="0" cy="0" r="1.4" fill="#fff"/></g>
<g transform="translate(468.0 195.8) scale(1.15)"><path d="M0 -3.3 c-1.9 0 -3.3 1.5 -3.3 3.3 c0 2.3 3.3 5.6 3.3 5.6 s3.3 -3.3 3.3 -5.6 c0 -1.8 -1.4 -3.3 -3.3 -3.3z" fill="#b8b8b8" stroke="#fff" stroke-opacity="0.7" stroke-width="0.5"/><circle cx="0" cy="0" r="1.4" fill="#fff"/></g>
<g transform="translate(468.8 200.6) scale(1.15)"><path d="M0 -3.3 c-1.9 0 -3.3 1.5 -3.3 3.3 c0 2.3 3.3 5.6 3.3 5.6 s3.3 -3.3 3.3 -5.6 c0 -1.8 -1.4 -3.3 -3.3 -3.3z" fill="#24ad5c" stroke="#fff" stroke-opacity="0.7" stroke-width="0.5"/><circle cx="0" cy="0" r="1.4" fill="#fff"/></g>
<g transform="translate(459.1 203.0) scale(1.15)"><path d="M0 -3.3 c-1.9 0 -3.3 1.5 -3.3 3.3 c0 2.3 3.3 5.6 3.3 5.6 s3.3 -3.3 3.3 -5.6 c0 -1.8 -1.4 -3.3 -3.3 -3.3z" fill="#24ad5c" stroke="#fff" stroke-opacity="0.7" stroke-width="0.5"/><circle cx="0" cy="0" r="1.4" fill="#fff"/></g>
<g transform="translate(461.5 207.9) scale(1.15)"><path d="M0 -3.3 c-1.9 0 -3.3 1.5 -3.3 3.3 c0 2.3 3.3 5.6 3.3 5.6 s3.3 -3.3 3.3 -5.6 c0 -1.8 -1.4 -3.3 -3.3 -3.3z" fill="#24ad5c" stroke="#fff" stroke-opacity="0.7" stroke-width="0.5"/><circle cx="0" cy="0" r="1.4" fill="#fff"/></g>
<rect x="137" y="114" width="115" height="96" rx="4" fill="#fff" fill-opacity="0.86"/>
<text x="156" y="127.7" font-size="10" fill="#4a9ef0" dominant-baseline="central">全部建筑（84）</text>
<path d="M154.5 144.7 c-2.2 0 -4 1.8 -4 4 c0 2.8 4 6.6 4 6.6 s4 -3.8 4 -6.6 c0 -2.2 -1.8 -4 -4 -4z" fill="#3bb56e"/><circle cx="154.5" cy="148.7" r="1.6" fill="#fff"/>
<text x="162" y="150.3" font-size="10" fill="#62c29a" dominant-baseline="central">在线（22）</text>
<path d="M154.5 168.7 c-2.2 0 -4 1.8 -4 4 c0 2.8 4 6.6 4 6.6 s4 -3.8 4 -6.6 c0 -2.2 -1.8 -4 -4 -4z" fill="#eea43a"/><circle cx="154.5" cy="172.7" r="1.6" fill="#fff"/>
<text x="162" y="174.4" font-size="10" fill="#eea43a" dominant-baseline="central">部分在线（26）</text>
<path d="M154.5 191.7 c-2.2 0 -4 1.8 -4 4 c0 2.8 4 6.6 4 6.6 s4 -3.8 4 -6.6 c0 -2.2 -1.8 -4 -4 -4z" fill="#bdbdbd"/><circle cx="154.5" cy="195.7" r="1.6" fill="#fff"/>
<text x="162" y="197.5" font-size="10" fill="#e5484d" dominant-baseline="central">离线（36）</text>
</svg>
<div class="a" style="left:564.0px;top:64.0px;width:390.0px;height:237.0px;border:1px solid #e6e8eb;overflow:hidden;background:#fff">
<div class="a" style="left:0;top:0;width:400px;height:29.0px;background:#f5f7fa"></div>
<div class="a" style="left:0;top:29.0px;width:384px;height:29.5px;background:#fff;border-top:1px solid #eeeff2"></div>
<div class="a" style="left:0;top:58.5px;width:384px;height:29.5px;background:#fafafa;border-top:1px solid #eeeff2"></div>
<div class="a" style="left:0;top:88.0px;width:384px;height:29.5px;background:#fff;border-top:1px solid #eeeff2"></div>
<div class="a" style="left:0;top:117.5px;width:384px;height:29.5px;background:#fafafa;border-top:1px solid #eeeff2"></div>
<div class="a" style="left:0;top:147.0px;width:384px;height:29.5px;background:#fff;border-top:1px solid #eeeff2"></div>
<div class="a" style="left:0;top:176.5px;width:384px;height:29.5px;background:#fafafa;border-top:1px solid #eeeff2"></div>
<div class="a" style="left:0;top:206.0px;width:384px;height:29.5px;background:#fff;border-top:1px solid #eeeff2"></div>
<div class="a" style="left:0;top:28.6px;width:400px;height:1px;background:#eeeff2"></div>
<div class="a" style="left:35.5px;top:0;width:1px;height:240px;background:#eeeff2"></div>
<div class="a" style="left:81.5px;top:0;width:1px;height:240px;background:#eeeff2"></div>
<div class="a" style="left:168.5px;top:0;width:1px;height:240px;background:#eeeff2"></div>
<div class="a" style="left:272.7px;top:0;width:1px;height:240px;background:#eeeff2"></div>
<div class="a" style="left:365.5px;top:0;width:1px;height:240px;background:#eeeff2"></div>
<div class="a" style="left:17.5px;top:9.1px;width:0;text-align:center;font-size:9.0px;color:#606266;line-height:12px;"><span style="position:absolute;left:0;transform:translateX(-50%)">序号</span></div>
<div class="a" style="left:55.5px;top:9.1px;width:0;text-align:center;font-size:9.0px;color:#606266;line-height:12px;"><span style="position:absolute;left:0;transform:translateX(-50%)">状态<svg width="5.5" height="8" viewBox="0 0 5.5 8" style="vertical-align:-1px;margin-left:4.5px"><path d="M0.3 3.4L2.75 0.6L5.2 3.4Z" fill="#1890ff"/><path d="M0.3 4.6L2.75 7.4L5.2 4.6Z" fill="#b3d8ff"/></svg></span></div>
<div class="a" style="left:124.7px;top:9.1px;width:0;text-align:center;font-size:9.0px;color:#606266;line-height:12px;"><span style="position:absolute;left:0;transform:translateX(-50%)">总数/在线/离线</span></div>
<div class="a" style="left:174.0px;top:9.1px;font-size:9.0px;color:#606266;line-height:12px;">建筑名称<svg width="5.5" height="8" viewBox="0 0 5.5 8" style="vertical-align:-1px;margin-left:4.5px"><path d="M0.3 3.4L2.75 0.6L5.2 3.4Z" fill="#c0c4cc"/><path d="M0.3 4.6L2.75 7.4L5.2 4.6Z" fill="#c0c4cc"/></svg></div>
<div class="a" style="left:316.5px;top:9.1px;width:0;text-align:center;font-size:9.0px;color:#606266;line-height:12px;"><span style="position:absolute;left:0;transform:translateX(-50%)">最后在线时间<svg width="5.5" height="8" viewBox="0 0 5.5 8" style="vertical-align:-1px;margin-left:4.5px"><path d="M0.3 3.4L2.75 0.6L5.2 3.4Z" fill="#c0c4cc"/><path d="M0.3 4.6L2.75 7.4L5.2 4.6Z" fill="#c0c4cc"/></svg></span></div>
<div class="a" style="left:371.0px;top:9.1px;font-size:9.0px;color:#606266;line-height:12px;">维护</div>
<div class="a" style="left:17.5px;top:38.7px;width:0;text-align:center;font-size:8.4px;color:#606266;line-height:12px;"><span style="position:absolute;left:0;transform:translateX(-50%)">1</span></div>
<div class="a" style="left:58.5px;top:38.7px;width:0;text-align:center;font-size:9.0px;color:#72c69a;line-height:12px;"><span style="position:absolute;left:0;transform:translateX(-50%)">在线</span></div>
<div class="a" style="left:124.7px;top:38.7px;width:0;text-align:center;font-size:9.0px;color:#606266;line-height:12px;"><span style="position:absolute;left:0;transform:translateX(-50%)"><span style="font-size:8.45px">7 / </span><span style="color:#72c69a;font-size:8.45px">7</span><span style="font-size:8.45px"> / </span><span style="color:#d4001a;font-size:8.45px">0</span></span></div>
<div class="a" style="left:174.0px;top:38.7px;font-size:8.0px;color:#1a7fd6;line-height:12px;transform:scaleX(1.04);transform-origin:0 50%">常州市焦溪派出所</div>
<div class="a" style="left:318.5px;top:38.7px;width:0;text-align:center;font-size:8.4px;color:#606266;line-height:12px;"><span style="position:absolute;left:0;transform:translateX(-50%)">2022-07-04 11:00:30</span></div>
<div class="a" style="left:17.5px;top:68.2px;width:0;text-align:center;font-size:8.4px;color:#606266;line-height:12px;"><span style="position:absolute;left:0;transform:translateX(-50%)">2</span></div>
<div class="a" style="left:58.5px;top:68.2px;width:0;text-align:center;font-size:9.0px;color:#72c69a;line-height:12px;"><span style="position:absolute;left:0;transform:translateX(-50%)">在线</span></div>
<div class="a" style="left:124.7px;top:68.2px;width:0;text-align:center;font-size:9.0px;color:#606266;line-height:12px;"><span style="position:absolute;left:0;transform:translateX(-50%)"><span style="font-size:8.45px">7 / </span><span style="color:#72c69a;font-size:8.45px">7</span><span style="font-size:8.45px"> / </span><span style="color:#d4001a;font-size:8.45px">0</span></span></div>
<div class="a" style="left:174.0px;top:68.2px;font-size:8.0px;color:#1a7fd6;line-height:12px;transform:scaleX(1.04);transform-origin:0 50%">常州市郑陆派出所</div>
<div class="a" style="left:318.5px;top:68.2px;width:0;text-align:center;font-size:8.4px;color:#606266;line-height:12px;"><span style="position:absolute;left:0;transform:translateX(-50%)">2022-07-04 11:00:30</span></div>
<div class="a" style="left:17.5px;top:97.7px;width:0;text-align:center;font-size:8.4px;color:#606266;line-height:12px;"><span style="position:absolute;left:0;transform:translateX(-50%)">3</span></div>
<div class="a" style="left:58.5px;top:97.7px;width:0;text-align:center;font-size:9.0px;color:#72c69a;line-height:12px;"><span style="position:absolute;left:0;transform:translateX(-50%)">在线</span></div>
<div class="a" style="left:124.7px;top:97.7px;width:0;text-align:center;font-size:9.0px;color:#606266;line-height:12px;"><span style="position:absolute;left:0;transform:translateX(-50%)"><span style="font-size:8.45px">33 / </span><span style="color:#72c69a;font-size:8.45px">33</span><span style="font-size:8.45px"> / </span><span style="color:#d4001a;font-size:8.45px">0</span></span></div>
<div class="a" style="left:174.0px;top:97.7px;font-size:8.0px;color:#1a7fd6;line-height:12px;transform:scaleX(1.04);transform-origin:0 50%">常州常瑰宾馆</div>
<div class="a" style="left:318.5px;top:97.7px;width:0;text-align:center;font-size:8.4px;color:#606266;line-height:12px;"><span style="position:absolute;left:0;transform:translateX(-50%)">2022-07-04 11:24:27</span></div>
<div class="a" style="left:17.5px;top:127.2px;width:0;text-align:center;font-size:8.4px;color:#606266;line-height:12px;"><span style="position:absolute;left:0;transform:translateX(-50%)">4</span></div>
<div class="a" style="left:58.5px;top:127.2px;width:0;text-align:center;font-size:9.0px;color:#72c69a;line-height:12px;"><span style="position:absolute;left:0;transform:translateX(-50%)">在线</span></div>
<div class="a" style="left:124.7px;top:127.2px;width:0;text-align:center;font-size:9.0px;color:#606266;line-height:12px;"><span style="position:absolute;left:0;transform:translateX(-50%)"><span style="font-size:8.45px">117 / </span><span style="color:#72c69a;font-size:8.45px">117</span><span style="font-size:8.45px"> / </span><span style="color:#d4001a;font-size:8.45px">0</span></span></div>
<div class="a" style="left:174.0px;top:127.2px;font-size:8.0px;color:#1a7fd6;line-height:12px;transform:scaleX(1.04);transform-origin:0 50%">常州市第二人民医院城...</div>
<div class="a" style="left:318.5px;top:127.2px;width:0;text-align:center;font-size:8.4px;color:#606266;line-height:12px;"><span style="position:absolute;left:0;transform:translateX(-50%)">2022-07-04 11:23:57</span></div>
<div class="a" style="left:17.5px;top:156.7px;width:0;text-align:center;font-size:8.4px;color:#606266;line-height:12px;"><span style="position:absolute;left:0;transform:translateX(-50%)">5</span></div>
<div class="a" style="left:58.5px;top:156.7px;width:0;text-align:center;font-size:9.0px;color:#72c69a;line-height:12px;"><span style="position:absolute;left:0;transform:translateX(-50%)">在线</span></div>
<div class="a" style="left:124.7px;top:156.7px;width:0;text-align:center;font-size:9.0px;color:#606266;line-height:12px;"><span style="position:absolute;left:0;transform:translateX(-50%)"><span style="font-size:8.45px">17 / </span><span style="color:#72c69a;font-size:8.45px">17</span><span style="font-size:8.45px"> / </span><span style="color:#d4001a;font-size:8.45px">0</span></span></div>
<div class="a" style="left:174.0px;top:156.7px;font-size:8.0px;color:#1a7fd6;line-height:12px;transform:scaleX(1.04);transform-origin:0 50%">常州阳光国际大酒店</div>
<div class="a" style="left:318.5px;top:156.7px;width:0;text-align:center;font-size:8.4px;color:#606266;line-height:12px;"><span style="position:absolute;left:0;transform:translateX(-50%)">2022-07-04 11:19:42</span></div>
<div class="a" style="left:17.5px;top:186.2px;width:0;text-align:center;font-size:8.4px;color:#606266;line-height:12px;"><span style="position:absolute;left:0;transform:translateX(-50%)">6</span></div>
<div class="a" style="left:58.5px;top:186.2px;width:0;text-align:center;font-size:9.0px;color:#72c69a;line-height:12px;"><span style="position:absolute;left:0;transform:translateX(-50%)">在线</span></div>
<div class="a" style="left:124.7px;top:186.2px;width:0;text-align:center;font-size:9.0px;color:#606266;line-height:12px;"><span style="position:absolute;left:0;transform:translateX(-50%)"><span style="font-size:8.45px">21 / </span><span style="color:#72c69a;font-size:8.45px">21</span><span style="font-size:8.45px"> / </span><span style="color:#d4001a;font-size:8.45px">0</span></span></div>
<div class="a" style="left:174.0px;top:186.2px;font-size:8.0px;color:#1a7fd6;line-height:12px;transform:scaleX(1.04);transform-origin:0 50%">常州市刘国钧职教中心...</div>
<div class="a" style="left:318.5px;top:186.2px;width:0;text-align:center;font-size:8.4px;color:#606266;line-height:12px;"><span style="position:absolute;left:0;transform:translateX(-50%)">2022-07-04 11:23:23</span></div>
<div class="a" style="left:17.5px;top:215.7px;width:0;text-align:center;font-size:8.4px;color:#606266;line-height:12px;"><span style="position:absolute;left:0;transform:translateX(-50%)">7</span></div>
<div class="a" style="left:58.5px;top:215.7px;width:0;text-align:center;font-size:9.0px;color:#72c69a;line-height:12px;"><span style="position:absolute;left:0;transform:translateX(-50%)">在线</span></div>
<div class="a" style="left:124.7px;top:215.7px;width:0;text-align:center;font-size:9.0px;color:#606266;line-height:12px;"><span style="position:absolute;left:0;transform:translateX(-50%)"><span style="font-size:8.45px">90 / </span><span style="color:#72c69a;font-size:8.45px">90</span><span style="font-size:8.45px"> / </span><span style="color:#d4001a;font-size:8.45px">0</span></span></div>
<div class="a" style="left:174.0px;top:215.7px;font-size:8.0px;color:#1a7fd6;line-height:12px;transform:scaleX(1.04);transform-origin:0 50%">刘国钧高等职业技术学校</div>
<div class="a" style="left:318.5px;top:215.7px;width:0;text-align:center;font-size:8.4px;color:#606266;line-height:12px;"><span style="position:absolute;left:0;transform:translateX(-50%)">2022-07-04 11:20:32</span></div>
<div class="a" style="left:0;top:231.5px;width:277px;height:3.5px;background:#dcdcdc;border-radius:2px"></div>
<div class="a" style="left:0;top:235.0px;width:400px;height:4px;background:#f3f3f3"></div>
<div class="a" style="left:384.5px;top:30.0px;width:3.5px;height:15px;background:#dcdcdc;border-radius:2px"></div>
</div>
</div>
<div class="card" style="top:369.7px;height:247px">
  <div class="bar" style="top:11.8px;height:10.6px"></div>
  <div class="ttl" style="left:15px;top:10.9px;line-height:14px;font-size:10px">建筑类型数量 （总数：84 栋）</div>
<svg class="a" style="left:8.0px;top:50.3px" width="430" height="180" viewBox="130 420 430 180" font-family="Liberation Sans, sans-serif">
<text x="171" y="574.90" font-size="6.6" fill="#707070" text-anchor="end" dominant-baseline="central">0</text>
<line x1="175.7" y1="554.60" x2="538.0" y2="554.60" stroke="#eceef2" stroke-width="0.8"/>
<text x="171" y="554.60" font-size="6.6" fill="#707070" text-anchor="end" dominant-baseline="central">5</text>
<line x1="175.7" y1="534.30" x2="538.0" y2="534.30" stroke="#eceef2" stroke-width="0.8"/>
<text x="171" y="534.30" font-size="6.6" fill="#707070" text-anchor="end" dominant-baseline="central">10</text>
<line x1="175.7" y1="514.00" x2="538.0" y2="514.00" stroke="#eceef2" stroke-width="0.8"/>
<text x="171" y="514.00" font-size="6.6" fill="#707070" text-anchor="end" dominant-baseline="central">15</text>
<line x1="175.7" y1="493.70" x2="538.0" y2="493.70" stroke="#eceef2" stroke-width="0.8"/>
<text x="171" y="493.70" font-size="6.6" fill="#707070" text-anchor="end" dominant-baseline="central">20</text>
<line x1="175.7" y1="473.40" x2="538.0" y2="473.40" stroke="#eceef2" stroke-width="0.8"/>
<text x="171" y="473.40" font-size="6.6" fill="#707070" text-anchor="end" dominant-baseline="central">25</text>
<line x1="175.7" y1="453.10" x2="538.0" y2="453.10" stroke="#eceef2" stroke-width="0.8"/>
<text x="171" y="453.10" font-size="6.6" fill="#707070" text-anchor="end" dominant-baseline="central">30</text>
<line x1="175.7" y1="432.80" x2="538.0" y2="432.80" stroke="#eceef2" stroke-width="0.8"/>
<text x="171" y="432.80" font-size="6.6" fill="#707070" text-anchor="end" dominant-baseline="central">35</text>
<rect x="182.59" y="449.04" width="31.5" height="125.86" fill="#3aa0ff"/>
<text x="198.34" y="441.74" font-size="6.6" fill="#555" text-anchor="middle" dominant-baseline="central">31</text>
<text x="198.34" y="581.60" font-size="7" fill="#666" text-anchor="middle" dominant-baseline="central">办公建筑</text>
<rect x="227.88" y="554.60" width="31.5" height="20.30" fill="#36cbcb"/>
<text x="243.63" y="547.30" font-size="6.6" fill="#555" text-anchor="middle" dominant-baseline="central">5</text>
<text x="243.63" y="581.60" font-size="7" fill="#666" text-anchor="middle" dominant-baseline="central">商场建筑</text>
<rect x="273.17" y="501.82" width="31.5" height="73.08" fill="#4ecb73"/>
<text x="288.92" y="494.52" font-size="6.6" fill="#555" text-anchor="middle" dominant-baseline="central">18</text>
<text x="288.92" y="581.60" font-size="7" fill="#666" text-anchor="middle" dominant-baseline="central">宾馆饭店</text>
<text x="288.92" y="589.50" font-size="7" fill="#666" text-anchor="middle" dominant-baseline="central">建筑</text>
<rect x="318.46" y="522.12" width="31.5" height="52.78" fill="#fbd437"/>
<text x="334.21" y="514.82" font-size="6.6" fill="#555" text-anchor="middle" dominant-baseline="central">13</text>
<text x="334.21" y="581.60" font-size="7" fill="#666" text-anchor="middle" dominant-baseline="central">文化教育</text>
<text x="334.21" y="589.50" font-size="7" fill="#666" text-anchor="middle" dominant-baseline="central">建筑</text>
<rect x="363.74" y="542.42" width="31.5" height="32.48" fill="#f2637b"/>
<text x="379.49" y="535.12" font-size="6.6" fill="#555" text-anchor="middle" dominant-baseline="central">8</text>
<text x="379.49" y="581.60" font-size="7" fill="#666" text-anchor="middle" dominant-baseline="central">医疗卫生</text>
<text x="379.49" y="589.50" font-size="7" fill="#666" text-anchor="middle" dominant-baseline="central">建筑</text>
<text x="424.78" y="567.60" font-size="6.6" fill="#555" text-anchor="middle" dominant-baseline="central">0</text>
<text x="424.78" y="581.60" font-size="7" fill="#666" text-anchor="middle" dominant-baseline="central">体育建筑</text>
<rect x="454.32" y="558.66" width="31.5" height="16.24" fill="#58689a"/>
<text x="470.07" y="551.36" font-size="6.6" fill="#555" text-anchor="middle" dominant-baseline="central">4</text>
<text x="470.07" y="581.60" font-size="7" fill="#666" text-anchor="middle" dominant-baseline="central">综合建筑</text>
<rect x="499.61" y="554.60" width="31.5" height="20.30" fill="#ffbe86"/>
<text x="515.36" y="547.30" font-size="6.6" fill="#555" text-anchor="middle" dominant-baseline="central">5</text>
<text x="515.36" y="581.60" font-size="7" fill="#666" text-anchor="middle" dominant-baseline="central">其他建筑</text>
<line x1="175.7" y1="574.90" x2="538.0" y2="574.90" stroke="#999" stroke-width="0.9"/>
<line x1="175.70" y1="574.90" x2="175.70" y2="577.90" stroke="#999" stroke-width="0.8"/>
<line x1="220.99" y1="574.90" x2="220.99" y2="577.90" stroke="#999" stroke-width="0.8"/>
<line x1="266.27" y1="574.90" x2="266.27" y2="577.90" stroke="#999" stroke-width="0.8"/>
<line x1="311.56" y1="574.90" x2="311.56" y2="577.90" stroke="#999" stroke-width="0.8"/>
<line x1="356.85" y1="574.90" x2="356.85" y2="577.90" stroke="#999" stroke-width="0.8"/>
<line x1="402.14" y1="574.90" x2="402.14" y2="577.90" stroke="#999" stroke-width="0.8"/>
<line x1="447.43" y1="574.90" x2="447.43" y2="577.90" stroke="#999" stroke-width="0.8"/>
<line x1="492.71" y1="574.90" x2="492.71" y2="577.90" stroke="#999" stroke-width="0.8"/>
<line x1="538.00" y1="574.90" x2="538.00" y2="577.90" stroke="#999" stroke-width="0.8"/>
<text x="0" y="0" font-size="7.6" fill="#666" text-anchor="middle" dominant-baseline="central" transform="translate(149.7 503.5) rotate(-90)">单位：栋</text>
</svg>
<svg class="a" style="left:443.0px;top:50.3px" width="280" height="165" viewBox="565 420 280 165" font-family="Liberation Sans, sans-serif">
<path d="M704.00 502.10 L704.00 439.30 A62.80 62.80 0 0 1 750.04 544.81 Z" fill="#3aa0ff" stroke="none"/>
<path d="M704.00 502.10 L750.04 544.81 A62.80 62.80 0 0 1 731.25 558.68 Z" fill="#36cbcb" stroke="none"/>
<path d="M704.00 502.10 L731.25 558.68 A62.80 62.80 0 0 1 654.90 541.26 Z" fill="#4ecb73" stroke="none"/>
<path d="M704.00 502.10 L654.90 541.26 A62.80 62.80 0 0 1 643.99 483.59 Z" fill="#fbd437" stroke="none"/>
<path d="M704.00 502.10 L643.99 483.59 A62.80 62.80 0 0 1 664.84 453.00 Z" fill="#f2637b" stroke="none"/>
<path d="M704.00 502.10 L664.84 453.00 A62.80 62.80 0 0 1 681.06 443.64 Z" fill="#58689a" stroke="none"/>
<path d="M704.00 502.10 L681.06 443.64 A62.80 62.80 0 0 1 704.00 439.30 Z" fill="#ffbe86" stroke="none"/>
<path d="M761.6 477.1 L769.4 473.6 L778.1 473.6" stroke="#3aa0ff" stroke-width="0.8" fill="none"/>
<text x="781.0" y="473.4" font-size="6.8" fill="#555" text-anchor="start" dominant-baseline="central">办公建筑：31 栋</text>
<path d="M741.3 550.7 L748.1 559.5 L755.8 559.5" stroke="#36cbcb" stroke-width="0.8" fill="none"/>
<text x="758.0" y="559.5" font-size="6.8" fill="#555" text-anchor="start" dominant-baseline="central">商场建筑：5 栋</text>
<path d="M690.3 563.5 L688.7 572.0 L679.8 572.0" stroke="#4ecb73" stroke-width="0.8" fill="none"/>
<text x="676.6" y="571.6" font-size="6.8" fill="#555" text-anchor="end" dominant-baseline="central">宾馆饭店建筑：18 栋</text>
<path d="M641.9 514.0 L629.0 515.5" stroke="#fbd437" stroke-width="0.8" fill="none"/>
<text x="625.7" y="515.2" font-size="6.8" fill="#555" text-anchor="end" dominant-baseline="central">文化教育建筑...</text>
<path d="M652.3 466.4 L648.2 461.6 L639.3 461.6" stroke="#f2637b" stroke-width="0.8" fill="none"/>
<text x="635.9" y="461.6" font-size="6.8" fill="#555" text-anchor="end" dominant-baseline="central">医疗卫生建筑：8 栋</text>
<path d="M666.0 453.4 L660.5 449.0 L651.0 448.6" stroke="#975fe5" stroke-width="0.8" fill="none"/>
<text x="648.2" y="448.6" font-size="6.8" fill="#555" text-anchor="end" dominant-baseline="central">体育建筑：0 栋</text>
<path d="M673.4 446.6 L670.7 440.5 L662.5 440.5" stroke="#58689a" stroke-width="0.8" fill="none"/>
<text x="659.0" y="440.5" font-size="6.8" fill="#555" text-anchor="end" dominant-baseline="central">综合建筑：4 栋</text>
<path d="M693.2 440.5 L690.5 432.0 L682.3 432.0" stroke="#ffbe86" stroke-width="0.8" fill="none"/>
<text x="679.5" y="431.6" font-size="6.8" fill="#555" text-anchor="end" dominant-baseline="central">其他建筑：5 栋</text>
</svg>
<div class="a" style="left:720.0px;top:28.6px;width:235.7px;height:208.3px;overflow:hidden;background:#fff">
<div class="a" style="left:0;top:0;width:400px;height:22.9px;background:#f5f7fa"></div>
<div class="a" style="left:0;top:22.9px;width:230.5px;height:23.2px;background:#fff;border-top:1px solid #eeeff2"></div>
<div class="a" style="left:0;top:46.1px;width:230.5px;height:23.2px;background:#fafafa;border-top:1px solid #eeeff2"></div>
<div class="a" style="left:0;top:69.2px;width:230.5px;height:23.2px;background:#fff;border-top:1px solid #eeeff2"></div>
<div class="a" style="left:0;top:92.4px;width:230.5px;height:23.2px;background:#fafafa;border-top:1px solid #eeeff2"></div>
<div class="a" style="left:0;top:115.6px;width:230.5px;height:23.2px;background:#fff;border-top:1px solid #eeeff2"></div>
<div class="a" style="left:0;top:138.8px;width:230.5px;height:23.2px;background:#fafafa;border-top:1px solid #eeeff2"></div>
<div class="a" style="left:0;top:161.9px;width:230.5px;height:23.2px;background:#fff;border-top:1px solid #eeeff2"></div>
<div class="a" style="left:0;top:185.1px;width:230.5px;height:23.2px;background:#fafafa;border-top:1px solid #eeeff2"></div>
<div class="a" style="left:46.2px;top:0;width:1px;height:220px;background:#eeeff2"></div>
<div class="a" style="left:139.0px;top:0;width:1px;height:220px;background:#eeeff2"></div>
<div class="a" style="left:230.5px;top:22.9px;width:5.2px;height:185.4px;background:#e6e6e6"></div>
<div class="a" style="left:230.5px;top:0.0px;width:5.2px;height:22.9px;background:#f2f2f2"></div>
<div class="a" style="left:23.3px;top:5.8px;width:0;font-size:9.0px;color:#6a6a6a;line-height:12px"><span style="position:absolute;left:0;transform:translateX(-50%)">序号</span></div>
<div class="a" style="left:92.7px;top:5.8px;width:0;font-size:9.0px;color:#6a6a6a;line-height:12px"><span style="position:absolute;left:0;transform:translateX(-50%)">建筑类型</span></div>
<div class="a" style="left:184.9px;top:5.8px;width:0;font-size:9.0px;color:#6a6a6a;line-height:12px"><span style="position:absolute;left:0;transform:translateX(-50%)">建筑数量</span></div>
<div class="a" style="left:23.3px;top:28.5px;width:0;font-size:9.0px;color:#6a6a6a;line-height:12px"><span style="position:absolute;left:0;transform:translateX(-50%)">A</span></div>
<div class="a" style="left:92.7px;top:28.5px;width:0;font-size:9.0px;color:#6a6a6a;line-height:12px"><span style="position:absolute;left:0;transform:translateX(-50%)">办公建筑</span></div>
<div class="a" style="left:184.9px;top:28.5px;width:0;font-size:9.0px;color:#6a6a6a;line-height:12px"><span style="position:absolute;left:0;transform:translateX(-50%)">31</span></div>
<div class="a" style="left:23.3px;top:51.7px;width:0;font-size:9.0px;color:#6a6a6a;line-height:12px"><span style="position:absolute;left:0;transform:translateX(-50%)">B</span></div>
<div class="a" style="left:92.7px;top:51.7px;width:0;font-size:9.0px;color:#6a6a6a;line-height:12px"><span style="position:absolute;left:0;transform:translateX(-50%)">商场建筑</span></div>
<div class="a" style="left:184.9px;top:51.7px;width:0;font-size:9.0px;color:#6a6a6a;line-height:12px"><span style="position:absolute;left:0;transform:translateX(-50%)">5</span></div>
<div class="a" style="left:23.3px;top:74.8px;width:0;font-size:9.0px;color:#6a6a6a;line-height:12px"><span style="position:absolute;left:0;transform:translateX(-50%)">C</span></div>
<div class="a" style="left:92.7px;top:74.8px;width:0;font-size:9.0px;color:#6a6a6a;line-height:12px"><span style="position:absolute;left:0;transform:translateX(-50%)">宾馆饭店建筑</span></div>
<div class="a" style="left:184.9px;top:74.8px;width:0;font-size:9.0px;color:#6a6a6a;line-height:12px"><span style="position:absolute;left:0;transform:translateX(-50%)">18</span></div>
<div class="a" style="left:23.3px;top:98.0px;width:0;font-size:9.0px;color:#6a6a6a;line-height:12px"><span style="position:absolute;left:0;transform:translateX(-50%)">D</span></div>
<div class="a" style="left:92.7px;top:98.0px;width:0;font-size:9.0px;color:#6a6a6a;line-height:12px"><span style="position:absolute;left:0;transform:translateX(-50%)">文化教育建筑</span></div>
<div class="a" style="left:184.9px;top:98.0px;width:0;font-size:9.0px;color:#6a6a6a;line-height:12px"><span style="position:absolute;left:0;transform:translateX(-50%)">13</span></div>
<div class="a" style="left:23.3px;top:121.2px;width:0;font-size:9.0px;color:#6a6a6a;line-height:12px"><span style="position:absolute;left:0;transform:translateX(-50%)">E</span></div>
<div class="a" style="left:92.7px;top:121.2px;width:0;font-size:9.0px;color:#6a6a6a;line-height:12px"><span style="position:absolute;left:0;transform:translateX(-50%)">医疗卫生建筑</span></div>
<div class="a" style="left:184.9px;top:121.2px;width:0;font-size:9.0px;color:#6a6a6a;line-height:12px"><span style="position:absolute;left:0;transform:translateX(-50%)">8</span></div>
<div class="a" style="left:23.3px;top:144.4px;width:0;font-size:9.0px;color:#6a6a6a;line-height:12px"><span style="position:absolute;left:0;transform:translateX(-50%)">F</span></div>
<div class="a" style="left:92.7px;top:144.4px;width:0;font-size:9.0px;color:#6a6a6a;line-height:12px"><span style="position:absolute;left:0;transform:translateX(-50%)">体育建筑</span></div>
<div class="a" style="left:184.9px;top:144.4px;width:0;font-size:9.0px;color:#6a6a6a;line-height:12px"><span style="position:absolute;left:0;transform:translateX(-50%)">0</span></div>
<div class="a" style="left:23.3px;top:167.5px;width:0;font-size:9.0px;color:#6a6a6a;line-height:12px"><span style="position:absolute;left:0;transform:translateX(-50%)">G</span></div>
<div class="a" style="left:92.7px;top:167.5px;width:0;font-size:9.0px;color:#6a6a6a;line-height:12px"><span style="position:absolute;left:0;transform:translateX(-50%)">综合建筑</span></div>
<div class="a" style="left:184.9px;top:167.5px;width:0;font-size:9.0px;color:#6a6a6a;line-height:12px"><span style="position:absolute;left:0;transform:translateX(-50%)">4</span></div>
<div class="a" style="left:23.3px;top:190.7px;width:0;font-size:9.0px;color:#6a6a6a;line-height:12px"><span style="position:absolute;left:0;transform:translateX(-50%)">H</span></div>
<div class="a" style="left:92.7px;top:190.7px;width:0;font-size:9.0px;color:#6a6a6a;line-height:12px"><span style="position:absolute;left:0;transform:translateX(-50%)">其他建筑</span></div>
<div class="a" style="left:184.9px;top:190.7px;width:0;font-size:9.0px;color:#6a6a6a;line-height:12px"><span style="position:absolute;left:0;transform:translateX(-50%)">5</span></div>
</div>
</div>
</body></html>
